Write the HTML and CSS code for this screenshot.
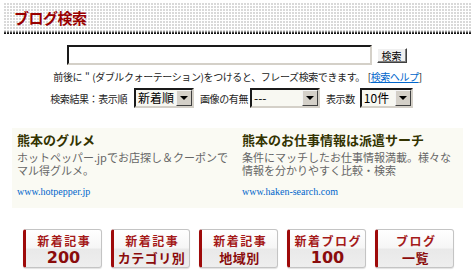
FILE: index.html
```html
<!DOCTYPE html>
<html lang="ja">
<head>
<meta charset="utf-8">
<title>ブログ検索</title>
<link rel="stylesheet" href="styles.css">
</head>
<body>
<div class="page">
  <div class="header"><h1 class="title">ブログ検索</h1></div>
  <div class="header-rule"></div>

  <form class="search">
    <div class="search-row">
      <input class="query" type="text">
      <button class="btn" type="button">検索</button>
    </div>
    <p class="hint">前後に " (ダブルクォーテーション)をつけると、フレーズ検索できます。 [<a class="help" href="#">検索ヘルプ</a>]</p>
    <div class="options">
      <span class="label">検索結果：表示順</span>
      <span class="select sel-order"><span class="val">新着順</span><span class="arrow"></span></span>
      <span class="label">画像の有無</span>
      <span class="select sel-image"><span class="val">---</span><span class="arrow"></span></span>
      <span class="label">表示数</span>
      <span class="select sel-count"><span class="val">10件</span><span class="arrow"></span></span>
    </div>
  </form>

  <div class="ads">
    <div class="ad ad-first">
      <h2 class="ad-title">熊本のグルメ</h2>
      <p class="ad-desc">ホットペッパー.jpでお店探し＆クーポンでマル得グルメ。</p>
      <a class="ad-url" href="#">www.hotpepper.jp</a>
    </div>
    <div class="ad">
      <h2 class="ad-title">熊本のお仕事情報は派遣サーチ</h2>
      <p class="ad-desc">条件にマッチしたお仕事情報満載。様々な情報を分かりやすく比較・検索</p>
      <a class="ad-url" href="#">www.haken-search.com</a>
    </div>
  </div>

  <div class="navs">
    <a class="nav" href="#"><span class="nav-top">新着記事</span><span class="nav-bottom num">200</span></a>
    <a class="nav" href="#"><span class="nav-top">新着記事</span><span class="nav-bottom">カテゴリ別</span></a>
    <a class="nav" href="#"><span class="nav-top">新着記事</span><span class="nav-bottom">地域別</span></a>
    <a class="nav" href="#"><span class="nav-top">新着ブログ</span><span class="nav-bottom num">100</span></a>
    <a class="nav" href="#"><span class="nav-top">ブログ</span><span class="nav-bottom">一覧</span></a>
  </div>
</div>
</body>
</html>
```

FILE: styles.css
```css
html, body {
  margin: 0;
  padding: 0;
  background: #fff;
}
body {
  font-family: "Noto Sans CJK JP", "Noto Sans", sans-serif;
  color: #000;
  width: 475px;
  height: 275px;
  overflow: hidden;
}
.page {
  padding: 3px 4px 0;
}

/* header */
.header {
  height: 28px;
  display: flex;
  align-items: center;
  padding-left: 10px;
  background:
    linear-gradient(90deg, transparent 2px, #fff 2px) 0 0 / 3px 3px,
    linear-gradient(transparent 2px, #fff 2px) 0 0 / 3px 3px,
    #d9d9d9;
}
.title {
  margin: 0;
  font-size: 15px;
  font-weight: bold;
  line-height: 1;
  color: #990000;
  letter-spacing: -0.5px;
}
.header-rule {
  height: 3px;
  background:
    linear-gradient(90deg, transparent 2px, #fff 2px) 0 0 / 3px 3px,
    linear-gradient(#9a9a9a 0 1px, #444 1px 2px, #111 2px 3px);
}

/* search */
.search {
  margin: 11px 0 0;
  display: flex;
  flex-direction: column;
  align-items: center;
}
.search-row {
  display: flex;
  align-items: center;
  gap: 5px;
  padding-right: 2px;
}
.query {
  box-sizing: border-box;
  width: 305px;
  height: 20px;
  margin: 0;
  padding: 0 2px;
  border: 2px solid;
  border-color: #1a1a1a #d4d0c8 #d4d0c8 #1a1a1a;
  background: #fff;
}
.btn {
  box-sizing: border-box;
  width: 30px;
  height: 15px;
  margin: 0;
  padding: 0;
  border: 1px solid;
  border-color: #fff #404040 #404040 #fff;
  box-shadow: inset -1px -1px 0 #808080;
  background: #f0f0f0;
  font-family: "Noto Sans CJK JP", sans-serif;
  font-size: 10px;
  line-height: 13px;
  color: #000;
}
.hint {
  margin: 6px 0 0;
  font-size: 10px;
  line-height: 12px;
  letter-spacing: -0.4px;
  word-spacing: 1px;
  color: #222;
  white-space: nowrap;
}
.help {
  color: #0066cc;
  text-decoration: underline;
}
.options {
  margin-top: 5px;
  display: flex;
  align-items: center;
  height: 20px;
  font-size: 10px;
  color: #222;
  padding-right: 6px;
}
.label {
  white-space: nowrap;
  letter-spacing: -0.4px;
}
.select {
  box-sizing: border-box;
  height: 20px;
  display: flex;
  align-items: center;
  justify-content: space-between;
  border: 2px solid;
  border-color: #1a1a1a #d4d0c8 #d4d0c8 #1a1a1a;
  background: #f8f8f2;
  margin: 0 6px 0 6px;
}
.sel-order { width: 60px; margin-left: 7px; }
.sel-image { width: 70px; margin-left: 2px; }
.sel-count { width: 53px; margin-left: 5px; }
.val {
  font-size: 12px;
  line-height: 16px;
  padding-left: 2px;
  color: #000;
  white-space: nowrap;
}
.arrow {
  box-sizing: border-box;
  width: 16px;
  height: 16px;
  border: 1px solid;
  border-color: #f4f4f4 #404040 #404040 #f4f4f4;
  background: #d4d0c8;
  display: flex;
  align-items: center;
  justify-content: center;
}
.arrow::before {
  content: "";
  border-left: 4px solid transparent;
  border-right: 4px solid transparent;
  border-top: 4px solid #000;
}

/* ads */
.ads {
  margin: 20px 8px 0;
  height: 80px;
  box-sizing: border-box;
  padding: 2px 5px 0;
  background: #fafaf3;
  display: grid;
  grid-template-columns: 225px 1fr;
}
.ad {
  display: flex;
  flex-direction: column;
  align-items: flex-start;
}
.ad-title {
  margin: 0;
  font-size: 13px;
  font-weight: bold;
  line-height: 19px;
  color: #333300;
  white-space: nowrap;
}
.ad-desc {
  margin: 2px 0 0;
  font-size: 11px;
  line-height: 13px;
  color: #666;
}
.ad-first .ad-desc {
  max-width: 212px;
}
.ad-url {
  margin-top: 9px;
  font-family: "Liberation Serif", serif;
  font-size: 10px;
  line-height: 12px;
  color: #0066cc;
  text-decoration: none;
}

/* nav buttons */
.navs {
  margin-top: 21px;
  padding-left: 19px;
  display: flex;
  gap: 9px;
}
.nav {
  box-sizing: border-box;
  width: 79px;
  height: 39px;
  border: 1px solid #c4c4c4;
  border-left: 3px solid #9e0a0a;
  border-radius: 3px;
  background: linear-gradient(#ffffff, #f6f6f6 48%, #e9e9e9 52%, #eeeeee);
  display: flex;
  flex-direction: column;
  align-items: center;
  text-decoration: none;
  font-weight: bold;
  box-shadow: 0 1px 1px rgba(0,0,0,0.12);
}
.nav-top {
  margin-top: 2px;
  font-size: 12px;
  line-height: 17px;
  letter-spacing: 1.5px;
  margin-right: -1.5px;
  color: #a51a1a;
  white-space: nowrap;
}
.nav-bottom {
  font-size: 13px;
  line-height: 18px;
  letter-spacing: 0.5px;
  color: #8a0c0c;
  white-space: nowrap;
}
.nav-bottom.num {
  font-family: "DejaVu Sans", sans-serif;
  font-size: 16px;
  letter-spacing: 0;
}
```
